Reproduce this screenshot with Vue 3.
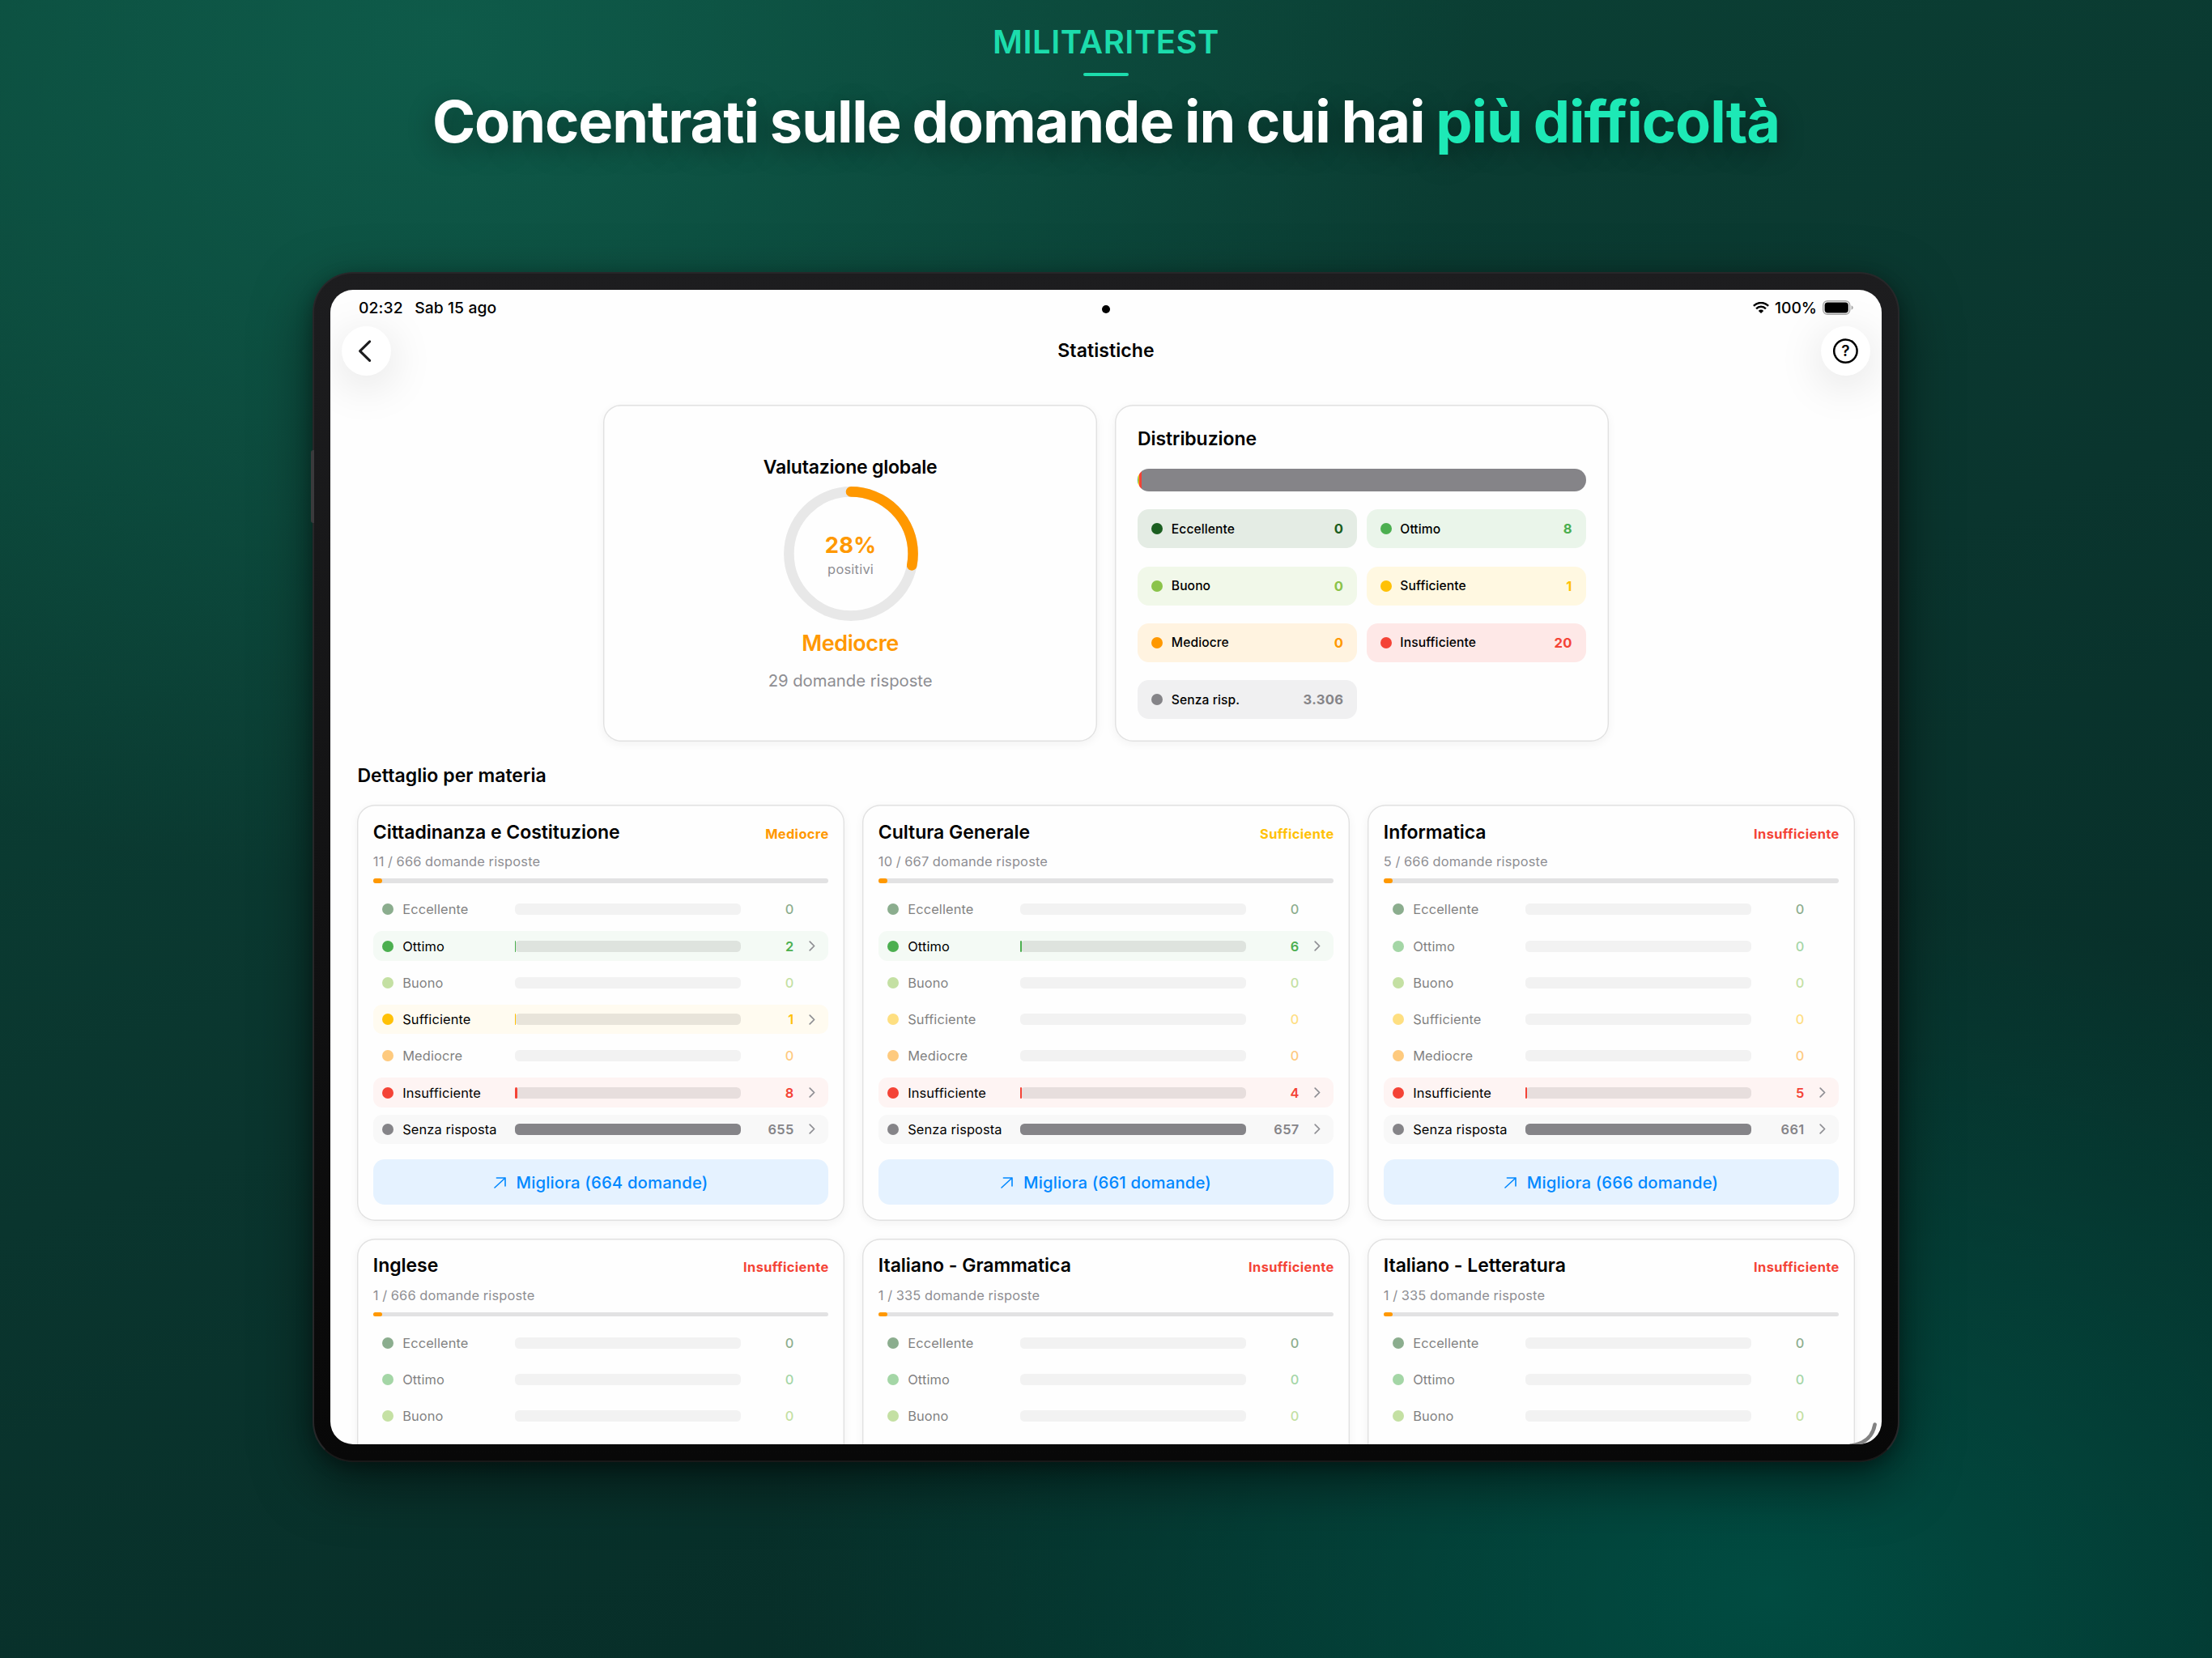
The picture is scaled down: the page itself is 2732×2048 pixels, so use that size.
<template>
  <div class="poster">
    <header class="intro">
      <p class="brand">MILITARITEST</p>
      <span class="rule"></span>
      <h1>Concentrati sulle domande in cui hai <em>più difficoltà</em></h1>
    </header>

    <div class="tablet">
      <div class="screen">
        <div class="status">
          <div class="status-left">
            <span>02:32</span>
            <span>Sab 15 ago</span>
          </div>
          <span class="camera"></span>
          <div class="status-right">
            <svg class="wifi" viewBox="0 0 20 14" fill="none" stroke="#000">
              <path d="M0.9 4.9A12.6 12.6 0 0 1 19.1 4.9" stroke-width="2.5" />
              <path d="M4.1 8.3A8.2 8.2 0 0 1 15.9 8.3" stroke-width="2.4" />
              <path d="M10 14L6.8 10.9A4.5 4.5 0 0 1 13.2 10.9Z" fill="#000" stroke="none" />
            </svg>
            <span>100%</span>
            <svg class="battery" viewBox="0 0 38 18">
              <rect x="0.7" y="0.7" width="33" height="16.6" rx="5.4" fill="none" stroke="#a6a6a6" stroke-width="1.4" />
              <rect x="2.6" y="2.6" width="29.2" height="12.8" rx="3.6" fill="#000" />
              <path d="M35.6 6.2Q37.8 7.2 37.8 9T35.6 11.8Z" fill="#a6a6a6" />
            </svg>
          </div>
        </div>

        <nav class="navbar">
          <button class="round">
            <svg viewBox="0 0 61 61" fill="none" stroke="#1c1c1e" stroke-width="3.1" stroke-linecap="round" stroke-linejoin="round">
              <path d="M34.6 18.8L22.6 30.6L34.6 42.4" />
            </svg>
          </button>
          <span class="nav-title">Statistiche</span>
          <button class="round">
            <svg viewBox="0 0 61 61">
              <circle cx="30.4" cy="30.6" r="14.2" fill="none" stroke="#000" stroke-width="2.5" />
              <text x="30.4" y="37.4" text-anchor="middle">?</text>
            </svg>
          </button>
        </nav>

        <section class="summary">
          <div class="card overall">
            <h2>Valutazione globale</h2>
            <div class="ring">
              <svg viewBox="0 0 166 166" fill="none" stroke-width="12.6">
                <circle cx="83" cy="83" r="76.6" stroke="#e8e8e8" />
                <circle
                  cx="83" cy="83" r="76.6" stroke="#ff9800" stroke-linecap="round"
                  pathLength="100" :stroke-dasharray="`${positive} 100`" transform="rotate(-90 83 83)"
                />
              </svg>
              <div class="ring-text">
                <strong>{{ positive }}%</strong>
                <span>positivi</span>
              </div>
            </div>
            <p class="verdict">Mediocre</p>
            <p class="answered">29 domande risposte</p>
          </div>

          <div class="card distribution">
            <h2>Distribuzione</h2>
            <div class="stack">
              <span v-for="g in totals" :key="g.id" class="part" :class="g.id" :style="{ flexGrow: g.count }"></span>
            </div>
            <div class="chips">
              <div v-for="g in totals" :key="g.id" class="chip" :class="g.id">
                <span class="dot"></span>
                <span>{{ g.id === "senza" ? "Senza risp." : g.label }}</span>
                <b>{{ g.count.toLocaleString("de-DE") }}</b>
              </div>
            </div>
          </div>
        </section>

        <h2 class="section-title">Dettaglio per materia</h2>

        <section class="subjects">
          <article v-for="s in subjects" :key="s.name" class="card subject">
            <div class="subject-head">
              <h3>{{ s.name }}</h3>
              <span class="badge" :class="s.grade">{{ labelOf(s.grade) }}</span>
            </div>
            <p class="subject-sub">{{ s.done }} / {{ s.total }} domande risposte</p>
            <div class="progress"><span></span></div>
            <ul>
              <li v-for="r in rowsOf(s)" :key="r.id" :class="[r.id, { empty: r.count === 0 }]">
                <span class="dot"></span>
                <span class="label">{{ r.label }}</span>
                <span class="track"><span :style="{ width: r.width + '%' }"></span></span>
                <span class="count">{{ r.count }}</span>
                <span class="more">
                  <svg v-if="r.count > 0" viewBox="0 0 8 13" fill="none" stroke="#8e8e93" stroke-width="1.7" stroke-linecap="round" stroke-linejoin="round">
                    <path d="M1.2 1.1L6.6 6.5L1.2 11.9" />
                  </svg>
                </span>
              </li>
            </ul>
            <button v-if="s.improve" class="improve">
              <svg viewBox="0 0 15 14" fill="none" stroke="#0088ff" stroke-width="1.6" stroke-linecap="round" stroke-linejoin="round">
                <path d="M1 13L14 1M3.4 1H14V11" />
              </svg>
              Migliora ({{ s.improve }} domande)
            </button>
          </article>
        </section>

        <svg class="corner" viewBox="0 0 60 40" fill="none">
          <path d="M51.6 15.5C49.5 28 41 39.5 22 41.5" stroke="#828282" stroke-width="4.6" stroke-linecap="round" />
        </svg>
      </div>
    </div>
  </div>
</template>

<script setup>
const grades = [
  { id: "eccellente", label: "Eccellente" },
  { id: "ottimo", label: "Ottimo" },
  { id: "buono", label: "Buono" },
  { id: "sufficiente", label: "Sufficiente" },
  { id: "mediocre", label: "Mediocre" },
  { id: "insufficiente", label: "Insufficiente" },
  { id: "senza", label: "Senza risposta" }
]

const positive = 28

const totalCounts = [0, 8, 0, 1, 0, 20, 3306]
const totals = grades.map((g, i) => ({ ...g, count: totalCounts[i] }))

const subjects = [
  { name: "Cittadinanza e Costituzione", grade: "mediocre", done: 11, total: 666, improve: 664, counts: [0, 2, 0, 1, 0, 8, 655] },
  { name: "Cultura Generale", grade: "sufficiente", done: 10, total: 667, improve: 661, counts: [0, 6, 0, 0, 0, 4, 657] },
  { name: "Informatica", grade: "insufficiente", done: 5, total: 666, improve: 666, counts: [0, 0, 0, 0, 0, 5, 661] },
  { name: "Inglese", grade: "insufficiente", done: 1, total: 666, counts: [0, 0, 0] },
  { name: "Italiano - Grammatica", grade: "insufficiente", done: 1, total: 335, counts: [0, 0, 0] },
  { name: "Italiano - Letteratura", grade: "insufficiente", done: 1, total: 335, counts: [0, 0, 0] }
]

const labelOf = (id) => grades.find((g) => g.id === id).label

// bars are relative to the biggest bucket of the subject
const rowsOf = (subject) => {
  const max = Math.max(...subject.counts, 1)
  return subject.counts.map((count, i) => ({
    ...grades[i],
    count,
    width: (count / max) * 100
  }))
}
</script>

<style>
body {
  margin: 0;
}
</style>

<style scoped>
.poster {
  width: 2732px;
  height: 2048px;
  overflow: hidden;
  display: flex;
  flex-direction: column;
  align-items: center;
  box-sizing: border-box;
  padding-top: 28px;
  font-family: Inter, "Liberation Sans", sans-serif;
  color: #000;
  background:
    radial-gradient(ellipse 1650px 1150px at 80% 96%, rgba(0, 80, 69, 0.88), rgba(0, 80, 69, 0) 75%),
    radial-gradient(ellipse 1500px 1250px at 20% 2%, rgba(15, 95, 77, 0.84), rgba(15, 95, 77, 0) 85%),
    linear-gradient(160deg, #0b4638 0%, #0a352e 50%, #052a25 100%);
}

h1, h2, h3, p, ul {
  margin: 0;
  padding: 0;
}

button {
  border: none;
  padding: 0;
  font-family: inherit;
}

.intro {
  display: flex;
  flex-direction: column;
  align-items: center;
}

.brand {
  font-size: 40px;
  line-height: 48px;
  font-weight: 600;
  letter-spacing: 0.5px;
  color: #1cdcac;
}

.rule {
  width: 56px;
  height: 4px;
  margin-top: 14px;
  border-radius: 2px;
  background: #1cdcac;
}

h1 {
  margin-top: 16px;
  font-size: 72px;
  line-height: 80px;
  font-weight: 700;
  letter-spacing: -1.05px;
  word-spacing: -2.2px;
  white-space: nowrap;
  color: #fff;
  text-shadow: 0 8px 32px rgba(0, 0, 0, 0.4);
}

h1 em {
  font-style: normal;
  color: #1de9b6;
}

.tablet {
  position: relative;
  flex: none;
  width: 1960px;
  height: 1470px;
  margin-top: 146px;
  box-sizing: border-box;
  border: 2px solid #272729;
  border-bottom-color: #191919;
  border-radius: 50px;
  padding: 20px;
  background: linear-gradient(180deg, #1d1d1f, #080808);
  box-shadow: 0 24px 70px rgba(0, 0, 0, 0.5), 0 6px 20px rgba(0, 0, 0, 0.3);
}

.tablet::before {
  content: "";
  position: absolute;
  left: -4px;
  top: 218px;
  width: 4px;
  height: 90px;
  border-radius: 3px 0 0 3px;
  background: #3a3a3c;
}

.screen {
  position: relative;
  height: 100%;
  overflow: hidden;
  border-radius: 28px;
  background: #fefefe;
}

.status {
  display: grid;
  grid-template-columns: 1fr auto 1fr;
  align-items: center;
  height: 44.7px;
  padding: 0 35px;
  font-size: 19.3px;
  font-weight: 500;
}

.status-left {
  display: flex;
  gap: 14.5px;
  letter-spacing: 0.1px;
}

.camera {
  width: 10px;
  height: 10px;
  margin-top: 4px;
  border-radius: 50%;
  background: #000;
}

.status-right {
  display: flex;
  align-items: center;
  justify-content: flex-end;
  gap: 7px;
}

.wifi {
  width: 20px;
  height: 14px;
}

.battery {
  width: 38px;
  height: 18px;
}

.navbar {
  display: flex;
  justify-content: space-between;
  align-items: center;
  height: 61px;
  padding: 0 14px;
}

.round {
  width: 61px;
  height: 61px;
  border-radius: 50%;
  background: #fff;
  box-shadow: 0 11px 56px rgba(0, 0, 0, 0.13);
}

.round svg {
  display: block;
  width: 61px;
  height: 61px;
}

.round text {
  font-size: 19px;
  font-weight: 600;
}

.nav-title {
  font-size: 23px;
  font-weight: 600;
  letter-spacing: 0.1px;
}

.card {
  box-sizing: border-box;
  background: #fefefe;
  border-radius: 22px;
  box-shadow: inset 0 0 0 1.4px #e1e1e1, 0 3px 12px rgba(0, 0, 0, 0.05);
}

h2, h3 {
  font-size: 23px;
  line-height: 28px;
  font-weight: 600;
}

.summary {
  display: flex;
  justify-content: center;
  gap: 22px;
  margin-top: 36.3px;
}

.summary .card {
  width: 609.8px;
  height: 416px;
}

.overall {
  display: flex;
  flex-direction: column;
  align-items: center;
  justify-content: center;
}

.overall h2 {
  letter-spacing: -0.2px;
}

.ring {
  display: grid;
  width: 166px;
  height: 166px;
  margin: 10.4px 0 0 1px;
}

.ring svg,
.ring-text {
  grid-area: 1 / 1;
}

.ring-text {
  display: flex;
  flex-direction: column;
  align-items: center;
  justify-content: center;
  gap: 3px;
}

.ring-text strong {
  font-size: 27.4px;
  line-height: 34px;
  letter-spacing: 0.3px;
  color: #ff9800;
}

.ring-text span {
  font-size: 16.4px;
  line-height: 20px;
  letter-spacing: 0.25px;
  color: #8e8e93;
}

.verdict {
  margin-top: 11px;
  font-size: 27px;
  line-height: 34px;
  font-weight: 600;
  letter-spacing: -0.44px;
  color: #ff9800;
}

.answered {
  margin-top: 16.8px;
  font-size: 20.3px;
  line-height: 24px;
  letter-spacing: -0.03px;
  color: #8e8e93;
}

.distribution {
  padding: 28px;
}

.distribution h2 {
  letter-spacing: -0.07px;
}

.stack {
  display: flex;
  height: 28px;
  margin-top: 23px;
  border-radius: 14px;
  overflow: hidden;
}

.part {
  flex-basis: 0;
  background: var(--tone);
}

.chips {
  display: grid;
  grid-template-columns: 1fr 1fr;
  gap: 22.3px 11.3px;
  margin-top: 22.4px;
}

.chip {
  display: flex;
  align-items: center;
  gap: 10.8px;
  height: 48px;
  box-sizing: border-box;
  padding: 0 17px;
  border-radius: 14px;
  font-size: 15.6px;
  font-weight: 500;
  letter-spacing: 0.1px;
  background: color-mix(in srgb, var(--tone) 12%, white);
}

.chip b {
  margin-left: auto;
  font-size: 16.6px;
  letter-spacing: 0.3px;
  color: var(--tone);
}

.dot {
  flex: none;
  width: 14px;
  height: 14px;
  border-radius: 50%;
  background: var(--tone);
}

.section-title {
  margin: 28px 0 0 33.4px;
  letter-spacing: 0.06px;
}

.subjects {
  display: grid;
  grid-template-columns: repeat(3, 602px);
  justify-content: center;
  gap: 21.6px 22px;
  margin-top: 22.2px;
}

.subject {
  height: 513.8px;
  padding: 19.8px;
}

.subject-head {
  display: flex;
  justify-content: space-between;
  align-items: baseline;
}

.subject h3 {
  letter-spacing: -0.03px;
}

.badge {
  font-size: 16.4px;
  line-height: 20px;
  font-weight: 700;
  letter-spacing: 0.36px;
  margin-right: -0.4px;
  color: var(--tone);
}

.subject-sub {
  margin-top: 12.4px;
  font-size: 16.4px;
  line-height: 20px;
  letter-spacing: 0.18px;
  word-spacing: -0.3px;
  color: #8e8e93;
}

.progress {
  height: 5.6px;
  margin-top: 11px;
  border-radius: 3px;
  background: #e2e2e3;
}

.progress span {
  display: block;
  width: 11px;
  height: 100%;
  border-radius: 3px;
  background: #ff9800;
}

ul {
  display: flex;
  flex-direction: column;
  gap: 8.87px;
  margin-top: 14.2px;
  list-style: none;
}

li {
  display: flex;
  align-items: center;
  height: 36.4px;
  box-sizing: border-box;
  padding: 0 11px;
  border-radius: 11px;
  font-size: 16.4px;
  letter-spacing: 0.12px;
  background: color-mix(in srgb, var(--tone) 6%, white);
}

li.empty {
  opacity: 0.5;
  background: none;
}

.label {
  width: 138.7px;
  margin-left: 11.4px;
}

.track {
  flex: 1;
  height: 14px;
  border-radius: 5.5px;
  background: rgba(0, 0, 0, 0.09);
}

.track span {
  display: block;
  height: 100%;
  border-radius: 5.5px;
  background: var(--tone);
}

.count {
  width: 66px;
  text-align: right;
  font-weight: 600;
  letter-spacing: 0.4px;
  color: var(--tone);
}

.empty .count {
  font-weight: 500;
}

.more {
  display: flex;
  justify-content: center;
  width: 31.5px;
  padding-left: 14px;
  box-sizing: border-box;
}

.more svg {
  width: 8px;
  height: 13px;
}

.improve {
  display: flex;
  align-items: center;
  justify-content: center;
  gap: 13px;
  width: 100%;
  height: 55.7px;
  margin-top: 19.2px;
  padding-top: 1px;
  border-radius: 14px;
  font-size: 20.3px;
  font-weight: 500;
  letter-spacing: 0.16px;
  color: #0088ff;
  background: #e5f2ff;
}

.improve svg {
  width: 15px;
  height: 14px;
}

.corner {
  position: absolute;
  right: 0;
  bottom: 0;
  width: 60px;
  height: 40px;
}

.eccellente { --tone: #1b5e20; }
.ottimo { --tone: #4caf50; }
.buono { --tone: #8bc34a; }
.sufficiente { --tone: #ffc107; }
.mediocre { --tone: #ff9800; }
.insufficiente { --tone: #f44336; }
.senza { --tone: #858488; }
</style>
